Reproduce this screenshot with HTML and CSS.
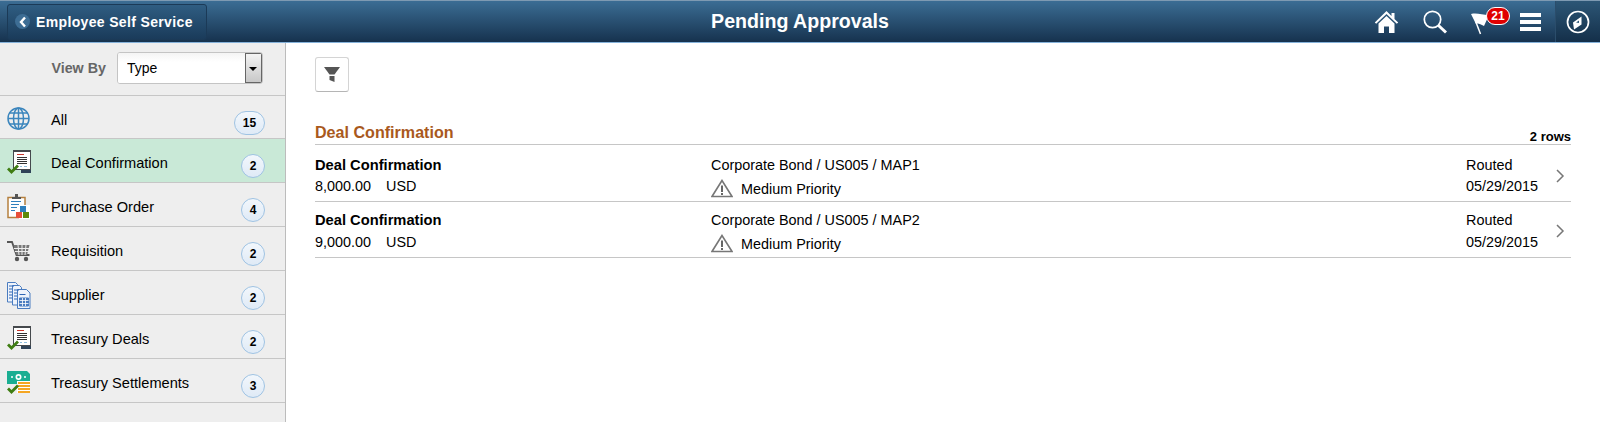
FILE: index.html
```html
<!DOCTYPE html>
<html lang="en">

<head>
    <meta charset="UTF-8" />
    <title>Pending Approvals</title>
    <link rel="stylesheet" href="styles.css">
</head>

<body>

    <header class="banner">
        <div class="banner-left">
            <button class="back-btn">
                <span class="back-circle">
                    <svg width="10" height="12" viewBox="0 0 10 12"><path d="M7 1.5 3 6l4 4.5" fill="none" stroke="#fff" stroke-width="2.4"/></svg>
                </span>
                Employee Self Service
            </button>
        </div>
        <h1 class="banner-title">Pending Approvals</h1>
        <div class="banner-right">
            <svg class="home-icon" width="25" height="24" viewBox="0 0 25 24">
                <path d="M12.5 1 .8 12.5l1.4 1.2L12.5 4l10.3 9.7 1.4-1.2-3.7-3.6V3h-3v3z" fill="#fff"/>
                <path d="M4.5 13.5 12.500 6l8 7.500V23h-5.500v-6.500h-5V23H4.500z" fill="#fff"/>
            </svg>
            <svg class="search-icon" width="26" height="26" viewBox="0 0 26 26">
                <circle cx="10.5" cy="10.5" r="8.2" fill="none" stroke="#fff" stroke-width="1.7"/>
                <path d="m16.5 16.5 7.5 7" stroke="#fff" stroke-width="3" fill="none"/>
            </svg>
            <div class="flag-wrap">
                <svg width="21" height="23" viewBox="0 0 21 23">
                    <path d="M0 2C6 .5 11 3 18 3l-5 11C9 12 7 11 5 12z" fill="#fff"/>
                    <path d="m4.500 9 5 13" stroke="#fff" stroke-width="1.5"/>
                </svg>
                <span class="flag-badge">21</span>
            </div>
            <div class="hamburger"><span></span><span></span><span></span></div>
            <div class="nav-compass">
                <svg width="24" height="24" viewBox="0 0 24 24">
                    <circle cx="12" cy="12" r="10.5" fill="none" stroke="#fff" stroke-width="1.7"/>
                    <path d="M15.5 6.500 7 12.500l1 7 7.500-5z" fill="#fff"/>
                    <path d="M10 12.500l3-2v2.500z" fill="#2c5676"/>
                </svg>
            </div>
        </div>
    </header>

    <div class="page">
        <aside class="sidebar">
            <div class="view-by">
                <label for="viewby" class="view-by-label">View By</label>
                <div class="select-box">
                    <select id="viewby" class="select-input">
                        <option>Type</option>
                    </select>
                    <span class="select-arrow"></span>
                </div>
            </div>

            <div class="side-row first">
                <svg class="side-icon" width="26" height="26" viewBox="0 0 26 26" fill="none" stroke="#3c86bd" stroke-width="1.5">
                    <circle cx="11.5" cy="11.5" r="10.5"/>
                    <ellipse cx="11.500" cy="11.5" rx="5" ry="10.5"/>
                    <path d="M11.5 1v21M1 11.500h21M2.500 6h18M2.500 17h18"/>
                </svg>
                <span class="side-label">All</span>
                <span class="count wide">15</span>
            </div>

            <div class="side-row active">
                <svg class="side-icon" width="26" height="26" viewBox="0 0 26 26">
                    <rect x="6.5" y="0.5" width="17" height="19" fill="#fff" stroke="#45494d"/>
                    <rect x="6" y="0" width="18" height="2" fill="#45494d"/>
                    <path d="M10 4.500h7" stroke="#c8372d"/>
                    <path d="M10 7.500h10M10 9.500h10M10 11.500h10M10 13.500h10" stroke="#333"/>
                    <path d="M13 16.500h2M17 16.500h3" stroke="#8fbedd"/>
                    <rect x="14" y="20" width="10" height="3" fill="#2f4358"/>
                    <path d="m1 18.500 3.500 3.500 6.500-6.500" fill="none" stroke="#3f7d12" stroke-width="2.8"/>
                </svg>
                <span class="side-label">Deal Confirmation</span>
                <span class="count">2</span>
            </div>

            <div class="side-row">
                <svg class="side-icon" width="26" height="26" viewBox="0 0 26 26">
                    <rect x="1" y="3.5" width="17" height="20" fill="#fff" stroke="#b5803f" stroke-width="1.5"/>
                    <path d="M5 5V3h3V0h3v3h3v2z" fill="#555"/>
                    <path d="M4 7.500h10M4 10.500h8M4 13.500h6M4 16.500h4" stroke="#2f80bd"/>
                    <rect x="12" y="11" width="11" height="14" fill="#fff"/>
                    <rect x="13" y="12" width="6" height="6" fill="#2f80bd"/>
                    <rect x="9" y="18" width="6" height="6" fill="#e8503a"/>
                    <rect x="16" y="18" width="6" height="6" fill="#5f8a0a"/>
                </svg>
                <span class="side-label">Purchase Order</span>
                <span class="count">4</span>
            </div>

            <div class="side-row">
                <svg class="side-icon cart-icon" width="26" height="22" viewBox="0 0 26 22">
                    <path d="M0 1h5l4.500 13h13" fill="none" stroke="#555" stroke-width="1.8"/>
                    <path d="M6.500 4h16L20 14H9.500z" fill="#777"/>
                    <path d="M7 7.500h15M8 10.500h13M11 4l1 10M15 4v10M19 4l-1 10" stroke="#eee"/>
                    <circle cx="10" cy="18" r="2.2" fill="#555"/>
                    <circle cx="19" cy="18" r="2.2" fill="#555"/>
                </svg>
                <span class="side-label">Requisition</span>
                <span class="count">2</span>
            </div>

            <div class="side-row">
                <svg class="side-icon" width="26" height="28" viewBox="0 0 26 28" stroke="#4a7cc0" fill="#eef3fb">
                    <path d="M.5.500h8l2 2V20H.500z"/>
                    <path d="M5.500 3.500h7l2 2V23h-9z"/>
                    <path d="M10.500 7.500h9l3.500 3.500v15.500H10.500z"/>
                    <path d="M2 4h5M2 7h3M2 10h3M2 13h3M2 16h3M7 8h5M7 11h3M7 14h3M7 17h3" stroke="#2f66b5"/>
                    <path d="M12.500 12.500h6" stroke="#2f66b5"/>
                    <path d="M12.500 16h9v8h-9z" fill="#4a7cc0"/>
                    <path d="M12.500 18.500h9M12.500 21.500h9M15.500 16v8M18.500 16v8" stroke="#fff" stroke-width=".8"/>
                </svg>
                <span class="side-label">Supplier</span>
                <span class="count">2</span>
            </div>

            <div class="side-row">
                <svg class="side-icon" width="26" height="26" viewBox="0 0 26 26">
                    <rect x="6.5" y="0.5" width="17" height="19" fill="#fff" stroke="#45494d"/>
                    <rect x="6" y="0" width="18" height="2" fill="#45494d"/>
                    <path d="M10 4.500h7" stroke="#c8372d"/>
                    <path d="M10 7.500h10M10 9.500h10M10 11.500h10M10 13.500h10" stroke="#333"/>
                    <path d="M13 16.500h2M17 16.500h3" stroke="#8fbedd"/>
                    <rect x="14" y="20" width="10" height="3" fill="#2f4358"/>
                    <path d="m1 18.500 3.500 3.500 6.500-6.500" fill="none" stroke="#3f7d12" stroke-width="2.8"/>
                </svg>
                <span class="side-label">Treasury Deals</span>
                <span class="count">2</span>
            </div>

            <div class="side-row">
                <svg class="side-icon" width="26" height="26" viewBox="0 0 26 26">
                    <path d="M0 1h20l3 3v10H0z" fill="#1aae92"/>
                    <circle cx="11.5" cy="7" r="3" fill="#fff"/>
                    <circle cx="11.5" cy="7" r="1.3" fill="#1aae92"/>
                    <circle cx="5" cy="7" r="1" fill="#fff"/>
                    <circle cx="18" cy="7" r="1" fill="#fff"/>
                    <rect x="10" y="11" width="13" height="12" fill="#fff"/>
                    <path d="M11 13h12M11 16h12M11 19h12M11 22h12" stroke="#f5a623" stroke-width="2"/>
                    <path d="m1 18.500 3.500 3.500 6.500-6.500" fill="none" stroke="#3f7d12" stroke-width="2.8"/>
                </svg>
                <span class="side-label">Treasury Settlements</span>
                <span class="count">3</span>
            </div>
        </aside>

        <main class="content">
            <button class="filter-btn">
                <svg width="16" height="16" viewBox="0 0 16 16"><path d="M0 0h16l-5.500 7.500h-5z" fill="#555"/><path d="M5.500 9h5v6l-5-2z" fill="#555"/></svg>
            </button>

            <div class="group-head">
                <h2 class="group-title">Deal Confirmation</h2>
                <span class="row-count">2 rows</span>
            </div>

            <div class="item">
                <div class="col-left">
                    <div class="item-name">Deal Confirmation</div>
                    <div class="item-line"><span class="amount">8,000.00</span>USD</div>
                </div>
                <div class="col-mid">
                    <div>Corporate Bond / US005 / MAP1</div>
                    <div class="item-line priority">
                        <svg width="22" height="19" viewBox="0 0 22 19"><path d="M11 1.500 1 17.500h20z" fill="none" stroke="#777" stroke-width="1.6"/><path d="M10 6.500h2V13h-2zM10 14h2v2h-2z" fill="#666"/></svg>
                        Medium Priority
                    </div>
                </div>
                <div class="col-right">
                    <div>Routed</div>
                    <div class="item-line">05/29/2015</div>
                </div>
                <svg class="chevron" width="9" height="14" viewBox="0 0 9 14"><path d="m1 1 6 6-6 6" fill="none" stroke="#777" stroke-width="1.5"/></svg>
            </div>

            <div class="item">
                <div class="col-left">
                    <div class="item-name">Deal Confirmation</div>
                    <div class="item-line"><span class="amount">9,000.00</span>USD</div>
                </div>
                <div class="col-mid">
                    <div>Corporate Bond / US005 / MAP2</div>
                    <div class="item-line priority">
                        <svg width="22" height="19" viewBox="0 0 22 19"><path d="M11 1.500 1 17.500h20z" fill="none" stroke="#777" stroke-width="1.6"/><path d="M10 6.500h2V13h-2zM10 14h2v2h-2z" fill="#666"/></svg>
                        Medium Priority
                    </div>
                </div>
                <div class="col-right">
                    <div>Routed</div>
                    <div class="item-line">05/29/2015</div>
                </div>
                <svg class="chevron" width="9" height="14" viewBox="0 0 9 14"><path d="m1 1 6 6-6 6" fill="none" stroke="#777" stroke-width="1.5"/></svg>
            </div>
        </main>
    </div>

</body>

</html>
```

FILE: styles.css
```css
* {
    box-sizing: border-box;
}

html,
body {
    height: 100%;
}

body {
    margin: 0;
    font-family: "Liberation Sans", Arial, sans-serif;
    font-size: 14px;
    color: #000;
    display: flex;
    flex-direction: column;
    overflow: hidden;
}

.banner {
    height: 43px;
    flex: none;
    display: flex;
    align-items: center;
    justify-content: space-between;
    background: linear-gradient(#3b6d94, #16324e);
    border-top: 1px solid #7e9ab2;
    border-bottom: 1px solid #85b2da;
}

.banner-left {
    width: 400px;
    padding-left: 7px;
}

.back-btn {
    width: 200px;
    height: 36px;
    display: flex;
    align-items: center;
    gap: 6px;
    padding: 0 0 0 7px;
    border: 1px solid #1b3a57;
    border-radius: 3px;
    background: linear-gradient(#2f5d82, #1a3b5a);
    color: #fff;
    font: bold 14px "Liberation Sans", Arial, sans-serif;
    letter-spacing: .35px;
}

.back-circle {
    width: 15px;
    height: 15px;
    border-radius: 50%;
    background: #3d6d94;
    display: flex;
    align-items: center;
    justify-content: center;
}

.banner-title {
    margin: 0;
    color: #fff;
    font-size: 19.6px;
    font-weight: bold;
}

.banner-right {
    width: 400px;
    height: 100%;
    display: flex;
    align-items: center;
    justify-content: flex-end;
}

.home-icon {
    margin-right: 23px;
}

.search-icon {
    margin-right: 23px;
}

.flag-wrap {
    position: relative;
    width: 37px;
    height: 25px;
    margin-right: 12px;
    padding-top: 3px;
}

.flag-badge {
    position: absolute;
    left: 15px;
    top: -2px;
    width: 24px;
    height: 18px;
    border-radius: 9px;
    background: #e00000;
    border: 1px solid #fff;
    color: #fff;
    font-size: 12px;
    font-weight: bold;
    line-height: 16px;
    text-align: center;
}

.hamburger {
    width: 21px;
    display: flex;
    flex-direction: column;
    gap: 3px;
    margin-right: 14px;
}

.hamburger span {
    height: 4px;
    background: #fff;
}

.nav-compass {
    width: 45px;
    height: 100%;
    display: flex;
    align-items: center;
    justify-content: center;
    background: linear-gradient(#2c5676, #142f49);
    border-left: 1px solid #2b4d6b;
}

.page {
    flex: 1;
    display: flex;
}

.sidebar {
    width: 286px;
    flex: none;
    background: #eeeeee;
    border-right: 1px solid #bcbcbc;
}

.view-by {
    height: 53px;
    display: flex;
    align-items: center;
    justify-content: flex-end;
    gap: 11px;
    padding: 0 22px 3px 0;
    border-bottom: 1px solid #c6c6c6;
}

.view-by-label {
    color: #666;
    font-size: 14.3px;
    font-weight: bold;
}

.select-box {
    width: 146px;
    height: 32px;
    display: flex;
    border: 1px solid #c4c4c4;
    border-radius: 3px;
    background: #fff;
    overflow: hidden;
}

.select-input {
    flex: 1;
    min-width: 0;
    appearance: none;
    border: 0;
    padding-left: 9px;
    background: linear-gradient(#f4f4f4, #fff 30%);
    font: 14px "Liberation Sans", Arial, sans-serif;
}

.select-arrow {
    width: 17px;
    position: relative;
    border: 1px solid #666;
    background: linear-gradient(#f4f4f4, #c8c8c8);
}

.select-arrow::after {
    content: "";
    position: absolute;
    left: 3px;
    top: 13px;
    border-left: 4px solid transparent;
    border-right: 4px solid transparent;
    border-top: 4px solid #000;
}

.side-row {
    height: 44px;
    display: flex;
    align-items: flex-start;
    padding: 11px 20px 0 7px;
    border-bottom: 1px solid #c6c6c6;
}

.side-row.first {
    height: 43px;
}

.side-row.active {
    background: #c9e9d7;
}

.side-icon {
    flex: none;
}

.cart-icon {
    margin-top: 3px;
}

.side-label {
    flex: 1;
    margin-left: 18px;
    margin-top: 3px;
    font-size: 14.6px;
    line-height: 20px;
}

.count {
    width: 24px;
    height: 24px;
    margin-top: 4px;
    border: 1px solid #9fc3e3;
    border-radius: 12px;
    background: linear-gradient(#f2f7fc, #dfeaf6);
    font-size: 12px;
    font-weight: bold;
    line-height: 23px;
    text-align: center;
}

.count.wide {
    width: 31px;
}

.content {
    flex: 1;
    min-width: 0;
    padding: 14px 29px 0 29px;
}

.filter-btn {
    width: 34px;
    height: 35px;
    display: flex;
    align-items: center;
    justify-content: center;
    padding: 0;
    border: 1px solid #d4d4d4;
    border-bottom-color: #b5b5b5;
    border-radius: 3px;
    background: #fff;
}

.group-head {
    height: 53px;
    display: flex;
    justify-content: space-between;
    align-items: flex-end;
    border-bottom: 1px solid #c6c6c6;
}

.group-title {
    margin: 0 0 2px;
    color: #a9591d;
    font-size: 16.1px;
    font-weight: bold;
}

.row-count {
    font-size: 13px;
    font-weight: bold;
}

.item {
    height: 57px;
    display: flex;
    align-items: flex-start;
    padding-top: 11px;
    border-bottom: 1px solid #c6c6c6;
    font-size: 14.4px;
    line-height: 18px;
}

.item + .item {
    height: 56px;
    padding-top: 9px;
}

.col-left {
    width: 396px;
}

.item-name {
    font-weight: bold;
    font-size: 14.7px;
}

.item-line {
    margin-top: 3px;
}

.item + .item .item-line {
    margin-top: 4px;
}

.amount {
    margin-right: 15px;
}

.col-mid {
    flex: 1;
}

.item .priority,
.item + .item .priority {
    display: flex;
    align-items: center;
    gap: 8px;
    margin-top: 5px;
}

.col-right {
    width: 90px;
}

.chevron {
    margin-top: 13px;
    margin-right: 6px;
}
```
